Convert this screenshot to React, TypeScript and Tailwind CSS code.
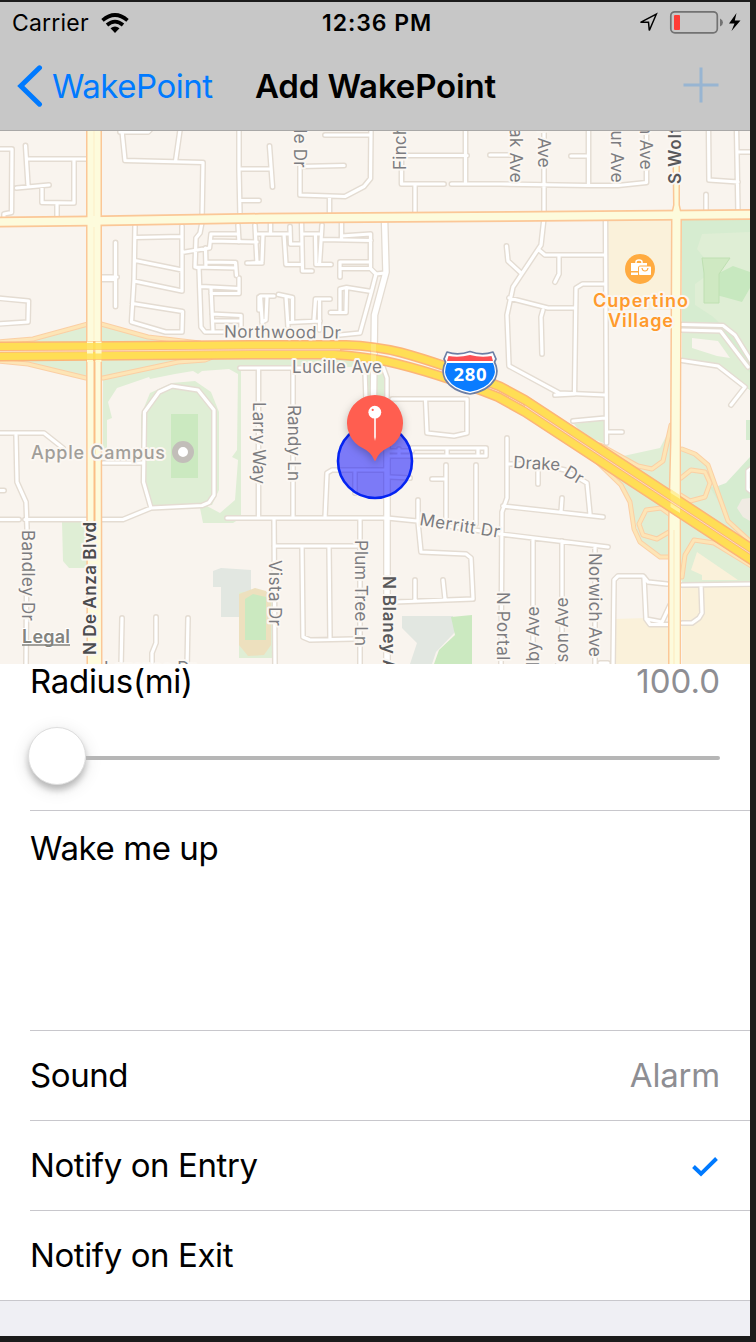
import React from "react";

const MINOR_ROADS = [
  "M-3 149H12L11.500 212.500L4 214V222",
  "M25.500 145.500L28 185M27 159H87M74 159V203L42 202.500V186M16.500 188L49 185M57 203V217",
  "M120 132H148L150 130M122 131L125 160.500L203 162.500L202 220M180 130L175.500 161.500",
  "M239 128V170L240 215M239 169H270M240 200.500H259M269.500 146L272.500 187",
  "M135 226L134 280L131.500 322L165.500 332H182L182.500 311.500L132.500 303.500M135 237.500L182 236.500M182 226V291L134 281M135 260.500L182 270",
  "M115.500 242.500V306.500M101 277H117M101 279.500H115",
  "M-3 298L28.500 301L28 322L-3 324",
  "M202 222L200 233L196 238L195 267L199 268L201 327L205 332H227",
  "M182 252.500L209.500 248L211 234H238M238 225L239 242M211 241L257 242M205.500 248L206 267M195 267L236 268M206 262L235.500 262.500L236.500 275.500",
  "M201 286.500L239 288.500M239 278V293.500H211M211 288L213 332M212 314L241 315.500V327M213 321H241",
  "M255 225L257 263M247 263H262M259 297V310",
  "M256.500 234H290M263 234L262 262L250 263M270.500 220V234M284 234L286 264.500H301.500M290 226.500L290.500 244H301.500",
  "M301.500 220L302.500 271H312M302.500 234H321.500M322 225L319.500 264.500M315.500 234L316 264.500H331M322 239.500L371 240.500M341.500 220V238.500M341.500 236L370.500 234V268.500L376 274L385 273",
  "M340 277V262H370.500M340 268.500H370.500M376 274L371.500 291.500L360 333L340 335M371.500 291.500L346.500 287.500L340 289V312.500M346.500 287.500L346 312.500H330.500",
  "M274 296H260.500L262.500 327M267 297L266 320L262 322M278.500 294.500L292.500 297.500V321.500M286 296.500L288 327M288 322.500L320 321M330 299H315.500L314 320M319.500 299V330",
  "M325 135H370M371 128L370.500 178.500L364 186.500L345 196.500L300 195V166.500L344 165.500M329.500 196.500V215",
  "M401.500 160V184H444M407 155.500H467M465.500 128V183.500M415 185V214M451.500 184H500L588 185.500L618 185.500L646.500 182.500V128M490 155H511",
  "M544 128V218L541 245L513 287L507 315L509 366L559 393L606 395M506.500 246L508 261L521 273M539 250L545 255H605M559 255V274L555 282M509 298L548 308H574M543 310L541 317L542 354",
  "M605.500 218L606.500 443M605 284H582.500L576 288L574.500 394M588.500 128V185M571 156H588M708.500 128L709 180L738 182M736.500 128L738 212M738 152H753M706 194.500V212",
  "M682 324.500L723 325.500L735 335L753 364M682 330L720.500 331L748 367M682 360.500L718 366L745 387L731 405",
  "M-3 433H44L63 448M103 463H143M16 435L17 482L26 502L27 528L26 670M-3 490.500H4M-3 519.500H19M25 519.500H123L151 508L202 505.500L209 502.500L214 495V410L198 390L172 386L159 392L144.500 412L143.500 482L151 508",
  "M227 518H387L417 521L500 534L608 547M122 618L121 668M156 617V643L152 653V668M188 618L187 668",
  "M240 368H340M258.500 368V518M293 368V518M365 372L366 400M383 367L387 378V400",
  "M325 518L327 473L332 470H387M355 472V493M412 448H486V456H390M390 451H412M399 449V456M447 448V456M478 448V456M390 477L410 478",
  "M392 399H467V433L454 436L427 433L425.500 399",
  "M274 518L275 668M274 546H357M302 547L303 637L310 640L353 639M329 547L330 639M360 518V668",
  "M418 500V522L421 552L466 554L471 558L473 599L395 602M415 580V601M443 580L445 599M446 465V518M432 479H446M476 465V524",
  "M507 438V498L502 512L501 668M507 464H540L565 470L587 483L590 514M538 464V484M503 506L603 517M562 498L561 512M533 538V668M562 541V668M595 547V668",
  "M573 421L605 418M607 432H622M555 395L574 394",
  "M613 668L614 580L618 576H643L648 582L667 584M644 577L646 619L650 624.500H669M646 619L662 622L670 605M682 585L753 584M701 585L702 613L699 618L692 623H682M752 468L748 471V489L752 492M600 663H608",
].join("");

const RAMPS = [
  "M-3 342L33 339L88 324H101L148 337L200 343",
  "M-3 361L28 364L86 378H103L178 362L205 360L215 356",
  "M671 425L663 461L652 469L638 466L600 445",
  "M682 449L695 454L708 465L728 521L753 544",
  "M681 478L691 470L705 472L710 483L705 497L690 501L677 493",
  "M669 532L657 539L643 535L639 524L646 510L661 508L672 516",
  "M590 455L621 485L630 502L634 529L640 542L660 557H670",
  "M682 577L685 555L694 540L714 543L753 567",
].join("");

const HWY_UPPER = "M-5 346.500L120 346L250 345H346Q375 346 401 352.500Q440 363 500 386.500L525 400L750 547.500L760 554";
const HWY_LOWER = "M-5 356.500L120 355.500L250 354.500H334Q360 356 385 361Q435 372 498 397L525 412L750 559L760 565.500";

type LabelProps = {
  x: number;
  y: number;
  r?: number;
  w?: number;
  size?: number;
  weight?: number;
  color?: string;
  end?: boolean;
  children: string;
};

function Label({ x, y, r = 0, w, size = 18, weight = 400, color = "#7c7c80", end, children }: LabelProps) {
  return (
    <text
      transform={`translate(${x} ${y}) rotate(${r})`}
      textAnchor={end ? "end" : "start"}
      textLength={w}
      lengthAdjust="spacing"
      fontSize={size}
      fontWeight={weight}
      fill={color}
      stroke="#fbf7f2"
      strokeWidth={4}
      strokeLinejoin="round"
      paintOrder="stroke"
      letterSpacing={w ? undefined : 0.25}
    >
      {children}
    </text>
  );
}

function MapView() {
  return (
    <svg viewBox="0 131 750 533" className="block h-[533px] w-[750px] shrink-0" fill="none">
      <rect x="0" y="131" width="750" height="533" fill="#f9f4ee" />

      {/* parks and other land areas */}
      <path d="M0 342L33 339L88 324H101L148 337L210 345V358L178 362L103 380H88L28 364L0 360Z" fill="#dfeed5" />
      <path d="M103 358H370V367H241V518L233 523H203L200 508L205 505L220 513L235 500L238 460L232 457L237 450L238 374L229 369L202 371L198 374L193 371L175 374L150 379L149 377L117 388L108 402L112 418L107 420V450H103Z" fill="#dfeed5" />
      <path d="M172 383L195 381L211 392L219 412L219 490L212 505L151 509L141 480V415L150 393Z" fill="#dfeed5" />
      <rect x="171" y="414" width="27" height="64" fill="#cbe9c0" />
      <path d="M363 372L385 368L387 400H365Z" fill="#dfeed5" />
      <path d="M62 522H88V568H69L63 561Z" fill="#dfeed5" />
      <path d="M213 571L221 568L251 570V617H221V587H213Z" fill="#e2e7e1" />
      <path d="M239 592H272V658H239Z" fill="#dfeed5" />
      <path d="M239 594L255 588L266 591L271 600V645L264 655L248 656L239 645Z" fill="#ede0be" />
      <path d="M245 599L253 594L266 597V640H245Z" fill="#cbe9c0" />
      <path d="M402 616L453 616L455 632L436 652L432 664H410L417 643L402 628Z" fill="#e2e7e1" />
      <path d="M451 617L472 615V664H434L439 650L455 635Z" fill="#cbe9c0" />
      <path d="M608 219H671V310H608Z" fill="#faf1da" />
      <path d="M682 219H750V390L738 382L718 366L682 360Z" fill="#d6ecd0" />
      <path d="M702 234L750 232V355L735 338L712 316L695 305V284L706 276L704 258L697 249Z" fill="#dfeed5" />
      <path d="M682 333H720L750 373V390L718 366L682 360Z" fill="#dfeed5" />
      <path d="M692 338L718 341L730 358L717 356L692 348Z" fill="#f9f4ee" />
      <path d="M704 272L721 272L733 266L750 272V288L742 302L724 297L704 292Z" fill="#c7e8bf" />
      <path d="M702 258H730L719 274V303H704V273Z" fill="#cfe9c2" stroke="#bfe0b2" />
      <path d="M605 420L574 424L583 435L606 444Z" fill="#dfeed5" />
      <path d="M660 448L671 427V520L643 535L640 542L660 557H670V530L634 510L621 485L605 460Z" fill="#dfeed5" />
      <path d="M638 466L655 468L664 460L671 430H681V449L695 454L708 465L728 521L750 544V582H682L671 558L640 542L630 502L621 485Z" fill="#dfeed5" />
      <path d="M710 487L718 486L726 483L750 457V542L732 525Z" fill="#d6ecd0" />
      <path d="M750 498L742 499L737 508L743 517L750 521Z" fill="#f0ebe3" />
      <path d="M697 552L738 580H702V575L691 570Z" fill="#faf1da" />
      <path d="M682 587H750V664H682ZM614 619L646 618L650 626H669V664H614Z" fill="#faf1da" />
      <path d="M746 420H750V440H746Z" fill="#d6ecd0" />

      {/* local streets */}
      <g strokeLinecap="round" strokeLinejoin="round">
        <path d={MINOR_ROADS} stroke="#e4dcd2" strokeWidth="6" />
        <path d="M384.500 218L386 272L374.500 315L373.500 397L387 430V668" stroke="#e4dcd2" strokeWidth="8" />
        <path d={MINOR_ROADS} stroke="#fff" strokeWidth="3.200" />
        <path d="M384.500 218L386 272L374.500 315L373.500 397L387 430V668" stroke="#fff" strokeWidth="5.400" />
        <path d={RAMPS} stroke="#fbcfa4" strokeWidth="5" />
        <path d={RAMPS} stroke="#fde5b6" strokeWidth="3" />
      </g>

      {/* arterials */}
      <path d="M-5 222L90 221L260 218.300L510 216.500L755 214.500" stroke="#fbc797" strokeWidth="11" />
      <path d="M94 125V350L94.500 670" stroke="#fbc797" strokeWidth="16" />
      <path d="M672 125H680V205L682 214L681 440V670H668V520L670 440L671 214L673 205Z" fill="#fbc797" />
      <path d="M-5 222L90 221L260 218.300L510 216.500L755 214.500" stroke="#fdfbdc" strokeWidth="7.500" />
      <path d="M94 125V350L94.500 670" stroke="#fdfbdc" strokeWidth="13" />
      <path d="M94 130V216M94 227V340" stroke="#fdf2cd" strokeWidth="1.500" />
      <path d="M94.500 360V521" stroke="#fbbf86" strokeWidth="2" />
      <path d="M673.500 125H678.500V205L680.500 214L679.700 440V670H669.500V520L671.500 440L672.500 214L674.500 205Z" fill="#fdfbdc" />
      <path d="M674 530V670" stroke="#fde9bd" strokeWidth="1" />

      {/* interstate */}
      <g strokeLinejoin="round">
        <path d={HWY_UPPER} stroke="#fcb578" strokeWidth="10.200" />
        <path d={HWY_LOWER} stroke="#fcb578" strokeWidth="10.200" />
        <path d={HWY_UPPER} stroke="#ffde55" strokeWidth="7.200" />
        <path d={HWY_LOWER} stroke="#ffde55" strokeWidth="7.200" />
        <path d="M-5 351.500L120 350.800L250 349.800H340" stroke="#fbe5cf" strokeWidth=".8" />
        <path d="M525 406L750 553.300" stroke="#fbe5cf" strokeWidth=".8" />
      </g>
      <path d="M90 341.500V343M98.500 341.500V343M90 350V353.500M98.500 350V353.500M90 360V362M98.500 360V362" stroke="#fffbd0" strokeWidth="6" />
      <path d="M90 343V360M98.500 343V360" stroke="#fff3a0" strokeWidth="6" opacity=".25" />
      <path d="M373.500 344V365" stroke="#fff0a0" strokeWidth="5" opacity=".4" />
      <path d="M670.500 489L680 495V499L670.500 493ZM670.500 503L680 509V513L670.500 507Z" fill="#fff7a8" opacity=".85" />
      <path d="M670.500 493L680 499V509L670.500 503Z" fill="#fff7a8" opacity=".25" />

      {/* labels */}
      <Label x={224} y={337.500} w={117} size={17} r={0.5}>Northwood Dr</Label>
      <Label x={292} y={373} w={90} size={17}>Lucille Ave</Label>
      <Label x={294} y={168} r={90} end size={17}>Merrivale Dr</Label>
      <Label x={406} y={170} r={-90} size={17}>Finch Ave</Label>
      <Label x={510} y={183} r={90} end size={17}>Oak Ave</Label>
      <Label x={538} y={168} r={90} end size={17}>Linden Ave</Label>
      <Label x={611} y={183} r={90} end size={17}>Arthur Ave</Label>
      <Label x={640} y={170} r={90} end size={17}>Denison Ave</Label>
      <Label x={681} y={184} r={-90} size={17} w={96} weight={600} color="#58585a">S Wolfe Rd</Label>
      <Label x={253} y={402} r={90} w={82} size={17}>Larry Way</Label>
      <Label x={288} y={405} r={90} w={76} size={17}>Randy Ln</Label>
      <Label x={21.500} y={530} r={90} w={91} size={17}>Bandley Dr</Label>
      <Label x={96} y={655} r={-90} w={133} size={17} weight={600} color="#4c4c4e">N De Anza Blvd</Label>
      <Label x={269} y={560} r={90} w={66} size={17}>Vista Dr</Label>
      <Label x={355} y={540} r={90} w={106} size={17}>Plum Tree Ln</Label>
      <Label x={383} y={576} r={90} w={116} size={17} weight={600} color="#58585a">N Blaney Ave</Label>
      <Label x={497} y={592} r={90} w={105} size={17}>N Portal Ave</Label>
      <Label x={539} y={606} r={-90} end size={17}>Shelby Ave</Label>
      <Label x={568} y={597} r={-90} end size={17}>Denison Ave</Label>
      <Label x={589} y={553} r={90} w={104} size={17}>Norwich Ave</Label>
      <Label x={419} y={525} r={9} w={81} size={17}>Merritt Dr</Label>
      <Label x={513} y={468} r={3} w={47} size={17}>Drake</Label>
      <Label x={563} y={475} r={31} w={19} size={17}>Dr</Label>
      <Label x={104} y={674} w={92} size={17}>Lazaneo Dr</Label>
      <Label x={31} y={459} w={134} size={18} weight={500} color="#a19e99">Apple Campus</Label>
      <circle cx="183" cy="452" r="8" stroke="#c2beb9" strokeWidth="6" fill="#fff" />
      <Label x={593} y={306.500} w={95} size={18} weight={600} color="#ff9a2d">Cupertino</Label>
      <Label x={608} y={326.500} w={65} size={18} weight={600} color="#ff9a2d">Village</Label>
      <circle cx="640" cy="269" r="15" fill="#ffab40" />
      <path d="M631 263H647V265.500H640.500Q638 265.500 638 268V271H631ZM631 272.500H638V275H631Z" fill="#fff" />
      <path d="M636 263V262Q636 260 639 260T642 262V263" stroke="#fff" strokeWidth="1.500" />
      <rect x="639" y="266.500" width="12" height="8.500" rx=".8" fill="#fff" />
      <path d="M642 268Q642.500 271 645 271T648 268" stroke="#ffab40" strokeWidth="1.200" />

      {/* route shield */}
      <path d="M447 352Q458 356 470 351.500Q482 356 493 352L496 359L494.500 362Q499 371 495 379Q488 391 470 394Q452 391 445 379Q441 371 445.500 362L444 359Z" fill="#fff" stroke="#6d7fa5" strokeWidth="1.700" strokeLinejoin="round" />
      <path d="M448.500 356Q459 358 470 355Q481 358 491.500 356L493 361H447Z" fill="#fc5054" />
      <path d="M447 363H493Q497 372 492.500 379Q486 389 470 391.800Q454 389 447.500 379Q443 372 447 363Z" fill="#0a7cff" />
      <text x="470" y="380.700" textAnchor="middle" fontSize="18.500" fontWeight="700" fill="#fff" textLength="33" className="font-['Noto_Sans']">280</text>

      <text x="22" y="643" fontSize="18" fontWeight="600" fill="#83837e" stroke="#fff" strokeWidth="2" paintOrder="stroke" textLength="48">Legal</text>
      <path d="M22 645H70" stroke="#83837e" strokeWidth="1.500" />

      {/* alert radius and pin */}
      <circle cx="375" cy="461" r="37" fill="#0000ff" fillOpacity=".5" stroke="#0524f2" strokeWidth="2.600" />
      <g className="drop-shadow-[0_3px_4px_rgba(0,0,0,0.25)]">
        <path d="M375 395A28 28 0 0 1 387 448.300Q379 452 375.800 460Q375 462 374.200 460Q371 452 363 448.300A28 28 0 0 1 375 395Z" fill="#ff5e50" />
      </g>
      <path d="M374.200 417H375.800V437L375 441L374.200 437Z" fill="#fff" />
      <circle cx="374.800" cy="412.200" r="6.400" fill="#fff" />
      <circle cx="372.700" cy="409.900" r="1.100" fill="#ff5e50" />
    </svg>
  );
}

function StatusBar() {
  return (
    <div className="flex h-[42px] items-center pl-3">
      <span className="w-[77px] text-[23px] leading-[42px] tracking-[0.2px] whitespace-nowrap text-black">Carrier</span>
      <svg viewBox="0 0 28 20" className="ml-3 h-5 w-7" fill="none" stroke="#000" strokeWidth="3.700">
        <path d="M1.500 7.300Q14 -3.300 26.500 7.300" />
        <path d="M6 12Q14 5.300 22 12" />
        <path d="M9.500 15.300Q14 11.500 18.500 15.300L14 20Z" fill="#000" stroke="none" />
      </svg>
      <span className="ml-[193px] w-[111px] text-[23px] leading-[42px] font-semibold tracking-[0.95px] whitespace-nowrap">12:36 PM</span>
      <svg viewBox="0 0 104 26" className="ml-[205px] h-[26px] w-[104px]" fill="none">
        <path d="M2.500 12.300L18.300 4.200L11.300 20.500L10.500 12.300Z" stroke="#000" strokeWidth="1.500" strokeLinejoin="miter" />
        <rect x="32.800" y="1.800" width="46.500" height="21" rx="4" stroke="#727272" strokeWidth="1.700" />
        <rect x="36" y="5" width="6" height="15" rx="1" fill="#ff3b35" />
        <path d="M82 8.500Q85 10 85 12.500T82 16.500Z" fill="#727272" />
        <path d="M98.500 3L91 13.500H96.500L93.500 21L102.500 10.500H96.800Z" fill="#000" />
      </svg>
    </div>
  );
}

function NavBar() {
  return (
    <div className="flex h-[84px] items-center pl-[17px]">
      <svg viewBox="0 0 26 42" className="h-[42px] w-[26px]" fill="none" stroke="#007aff" strokeWidth="5" strokeLinecap="round">
        <path d="M22.500 2.800L3.800 21L22.500 39.200" strokeLinejoin="miter" />
      </svg>
      <span className="ml-[9px] w-[161px] text-[33px] leading-[84px] tracking-[-0.5px] whitespace-nowrap text-[#007aff]">WakePoint</span>
      <span className="ml-[42px] w-[241px] text-[33px] leading-[84px] font-semibold tracking-[-0.15px] whitespace-nowrap">Add WakePoint</span>
      <svg viewBox="0 0 36 36" className="mb-[3px] ml-[187px] h-9 w-9" stroke="#98b5d2" strokeWidth="3">
        <path d="M.500 18H35.500M18 .500V35.500" />
      </svg>
    </div>
  );
}

function Row({ label, children }: { label: string; children?: React.ReactNode }) {
  return (
    <div className="flex h-[90px] items-center justify-between border-b border-[#c8c7cc] pr-[30px] last:h-[89px] last:border-b-0">
      <span className="text-[33px] tracking-[-0.4px]">{label}</span>
      {children}
    </div>
  );
}

export default function App() {
  return (
    <div className="h-[1342px] w-[756px] overflow-hidden bg-[#1b1b1b] pt-0.5 font-['Inter','Liberation_Sans',sans-serif] text-black">
      <div className="flex h-[1334px] w-[750px] flex-col overflow-hidden bg-[#efeff4]">
        <header className="h-[129px] shrink-0 border-b border-[#a9a8a7] bg-[#c7c7c7]">
          <StatusBar />
          <NavBar />
        </header>
        <MapView />
        <main className="border-b border-[#c8c7cc] bg-white pl-[30px]">
          <section className="h-[147px] border-b border-[#c8c7cc]">
            <div className="flex h-9 items-center justify-between pr-[30px] text-[33px]">
              <span className="tracking-[-0.3px]">Radius(mi)</span>
              <span className="tracking-[0px] text-[#8e8e93]">100.0</span>
            </div>
            <div className="-ml-0.5 mt-[27px] flex h-[58px] items-center pr-[30px]">
              <div className="h-[58px] w-[58px] shrink-0 rounded-full border border-[#dedede] bg-white shadow-[0_5px_6px_rgba(0,0,0,0.22),0_4px_18px_rgba(0,0,0,0.12)]" />
              <div className="mt-[3px] h-1 flex-1 rounded-r-full bg-[#b6b6b6]" />
            </div>
          </section>
          <section className="h-[220px] border-b border-[#c8c7cc] pt-[17px]">
            <p className="text-[33px] leading-10 tracking-[-0.42px]">Wake me up</p>
          </section>
          <Row label="Sound">
            <span className="text-[33px] tracking-[-0.2px] text-[#8e8e93]">Alarm</span>
          </Row>
          <Row label="Notify on Entry">
            <svg viewBox="0 0 28 22" className="mt-[3px] mr-px h-[22px] w-7" fill="none" stroke="#007aff" strokeWidth="4">
              <path d="M2.500 10.500L10 17.800L25.500 2.500" />
            </svg>
          </Row>
          <Row label="Notify on Exit" />
        </main>
      </div>
    </div>
  );
}
